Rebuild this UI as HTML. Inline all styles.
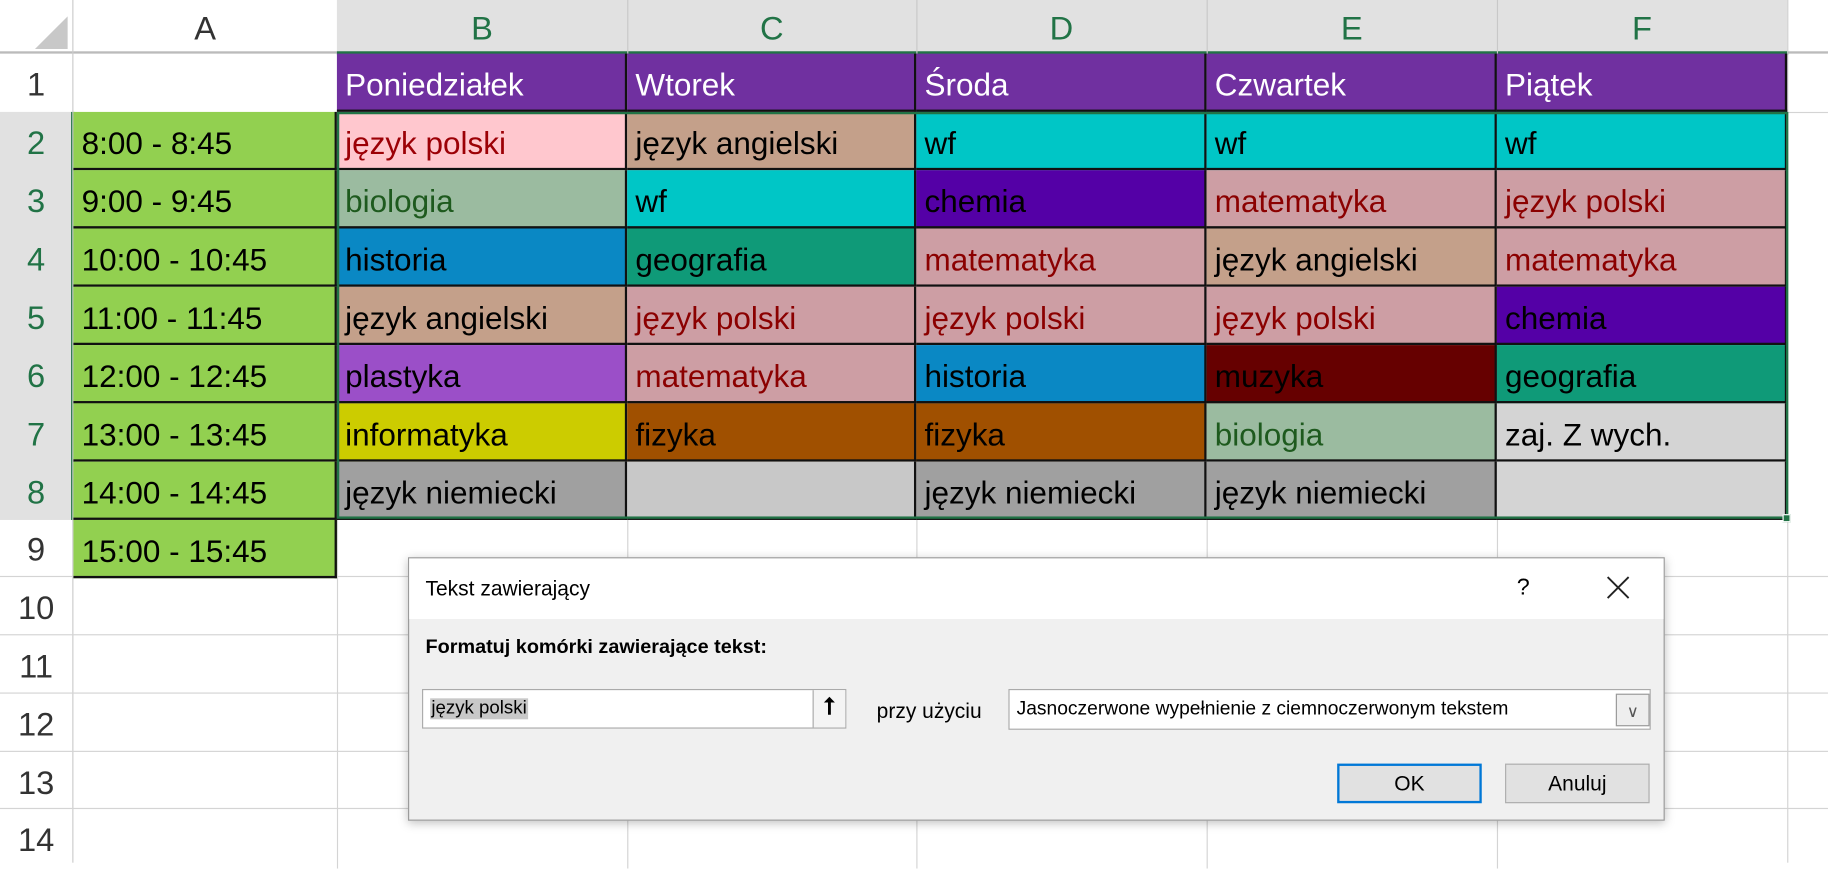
<!DOCTYPE html>
<html><head><meta charset="utf-8"><style>
body{margin:0;width:1828px;height:862px;overflow:hidden;background:#fff}
#w{position:absolute;left:0;top:0;width:1568px;height:740px;transform:scale(1.1658);transform-origin:0 0;font-family:"Liberation Sans",sans-serif}
.a{position:absolute;box-sizing:border-box}
.c{position:absolute;box-sizing:border-box;font-size:27px;line-height:50px;padding-left:7px;padding-top:2px;white-space:nowrap;overflow:hidden;border-right:2px solid #111;border-bottom:2px solid #111}
.h{position:absolute;text-align:center;font-size:28px;color:#217346;line-height:50px}
.r{position:absolute;width:62px;text-align:center;font-size:28px;line-height:50px;padding-top:2px;color:#333}
</style></head><body><div id="w">
<div class="a" style="left:0;top:0;width:1568px;height:46px;background:#fff"></div>
<div class="a" style="left:289px;top:0;width:1245px;height:46px;background:#e1e1e1"></div>
<div class="a" style="left:0;top:96px;width:63px;height:350px;background:#e1e1e1"></div>
<div class="a" style="left:0;top:44px;width:1568px;height:2px;background:#bbb"></div>
<div class="a" style="left:289px;top:44px;width:1245px;height:3px;background:#217346"></div>
<div class="a" style="left:61px;top:96px;width:3px;height:350px;background:#217346"></div>
<div class="a" style="left:62px;top:0;width:1px;height:740px;background:#ccc"></div>
<div class="a" style="left:30px;top:14px;width:0;height:0;border-left:28px solid transparent;border-bottom:28px solid #c8c8c8"></div>
<div class="h" style="left:63px;width:226px;top:0;color:#333">A</div>
<div class="h" style="left:289px;width:249px;top:0">B</div>
<div class="h" style="left:538px;width:248px;top:0">C</div>
<div class="h" style="left:786px;width:249px;top:0">D</div>
<div class="h" style="left:1035px;width:249px;top:0">E</div>
<div class="h" style="left:1284px;width:249px;top:0">F</div>
<div class="a" style="left:538px;top:0;width:1px;height:46px;background:#c8c8c8"></div>
<div class="a" style="left:786px;top:0;width:1px;height:46px;background:#c8c8c8"></div>
<div class="a" style="left:1035px;top:0;width:1px;height:46px;background:#c8c8c8"></div>
<div class="a" style="left:1284px;top:0;width:1px;height:46px;background:#c8c8c8"></div>
<div class="a" style="left:1533px;top:0;width:1px;height:740px;background:#d4d4d4"></div>
<div class="a" style="left:0;top:494px;width:1568px;height:1px;background:#d4d4d4"></div>
<div class="a" style="left:0;top:544px;width:1568px;height:1px;background:#d4d4d4"></div>
<div class="a" style="left:0;top:594px;width:1568px;height:1px;background:#d4d4d4"></div>
<div class="a" style="left:0;top:644px;width:1568px;height:1px;background:#d4d4d4"></div>
<div class="a" style="left:0;top:693px;width:1568px;height:1px;background:#d4d4d4"></div>
<div class="a" style="left:1533px;top:96px;width:35px;height:1px;background:#d4d4d4"></div>
<div class="a" style="left:289px;top:445px;width:1px;height:300px;background:#d4d4d4"></div>
<div class="a" style="left:538px;top:445px;width:1px;height:300px;background:#d4d4d4"></div>
<div class="a" style="left:786px;top:445px;width:1px;height:300px;background:#d4d4d4"></div>
<div class="a" style="left:1035px;top:445px;width:1px;height:300px;background:#d4d4d4"></div>
<div class="a" style="left:1284px;top:445px;width:1px;height:300px;background:#d4d4d4"></div>
<div class="r" style="top:46px">1</div>
<div class="r" style="top:96px;color:#217346">2</div>
<div class="r" style="top:146px;color:#217346">3</div>
<div class="r" style="top:196px;color:#217346">4</div>
<div class="r" style="top:246px;color:#217346">5</div>
<div class="r" style="top:296px;color:#217346">6</div>
<div class="r" style="top:346px;color:#217346">7</div>
<div class="r" style="top:396px;color:#217346">8</div>
<div class="r" style="top:445px">9</div>
<div class="r" style="top:495px">10</div>
<div class="r" style="top:545px">11</div>
<div class="r" style="top:595px">12</div>
<div class="r" style="top:645px">13</div>
<div class="r" style="top:694px">14</div>
<div class="c" style="left:289px;top:46px;width:249px;height:50px;background:#7030a0;color:#fff">Poniedziałek</div>
<div class="c" style="left:538px;top:46px;width:248px;height:50px;background:#7030a0;color:#fff">Wtorek</div>
<div class="c" style="left:786px;top:46px;width:249px;height:50px;background:#7030a0;color:#fff">Środa</div>
<div class="c" style="left:1035px;top:46px;width:249px;height:50px;background:#7030a0;color:#fff">Czwartek</div>
<div class="c" style="left:1284px;top:46px;width:249px;height:50px;background:#7030a0;color:#fff">Piątek</div>
<div class="c" style="left:63px;top:96px;width:226px;height:50px;background:#92d050">8:00 - 8:45</div>
<div class="c" style="left:63px;top:146px;width:226px;height:50px;background:#92d050">9:00 - 9:45</div>
<div class="c" style="left:63px;top:196px;width:226px;height:50px;background:#92d050">10:00 - 10:45</div>
<div class="c" style="left:63px;top:246px;width:226px;height:50px;background:#92d050">11:00 - 11:45</div>
<div class="c" style="left:63px;top:296px;width:226px;height:50px;background:#92d050">12:00 - 12:45</div>
<div class="c" style="left:63px;top:346px;width:226px;height:50px;background:#92d050">13:00 - 13:45</div>
<div class="c" style="left:63px;top:396px;width:226px;height:50px;background:#92d050">14:00 - 14:45</div>
<div class="c" style="left:63px;top:446px;width:226px;height:50px;background:#92d050">15:00 - 15:45</div>
<div class="c" style="left:289px;top:96px;width:249px;height:50px;background:#ffc7ce;color:#9c0006">język polski</div>
<div class="c" style="left:289px;top:146px;width:249px;height:50px;background:#9bbba0;color:#1e5a1e">biologia</div>
<div class="c" style="left:289px;top:196px;width:249px;height:50px;background:#0a88c4">historia</div>
<div class="c" style="left:289px;top:246px;width:249px;height:50px;background:#c4a08a">język angielski</div>
<div class="c" style="left:289px;top:296px;width:249px;height:50px;background:#9b4fc8">plastyka</div>
<div class="c" style="left:289px;top:346px;width:249px;height:50px;background:#cccc00">informatyka</div>
<div class="c" style="left:289px;top:396px;width:249px;height:50px;background:#a0a0a0">język niemiecki</div>
<div class="c" style="left:538px;top:96px;width:248px;height:50px;background:#c4a08a">język angielski</div>
<div class="c" style="left:538px;top:146px;width:248px;height:50px;background:#00c6c6">wf</div>
<div class="c" style="left:538px;top:196px;width:248px;height:50px;background:#0f9a78">geografia</div>
<div class="c" style="left:538px;top:246px;width:248px;height:50px;background:#cd9ea4;color:#8b0000">język polski</div>
<div class="c" style="left:538px;top:296px;width:248px;height:50px;background:#cd9ea4;color:#8b0000">matematyka</div>
<div class="c" style="left:538px;top:346px;width:248px;height:50px;background:#a05000">fizyka</div>
<div class="c" style="left:538px;top:396px;width:248px;height:50px;background:#c8c8c8"></div>
<div class="c" style="left:786px;top:96px;width:249px;height:50px;background:#00c6c6">wf</div>
<div class="c" style="left:786px;top:146px;width:249px;height:50px;background:#5400a6">chemia</div>
<div class="c" style="left:786px;top:196px;width:249px;height:50px;background:#cd9ea4;color:#8b0000">matematyka</div>
<div class="c" style="left:786px;top:246px;width:249px;height:50px;background:#cd9ea4;color:#8b0000">język polski</div>
<div class="c" style="left:786px;top:296px;width:249px;height:50px;background:#0a88c4">historia</div>
<div class="c" style="left:786px;top:346px;width:249px;height:50px;background:#a05000">fizyka</div>
<div class="c" style="left:786px;top:396px;width:249px;height:50px;background:#a0a0a0">język niemiecki</div>
<div class="c" style="left:1035px;top:96px;width:249px;height:50px;background:#00c6c6">wf</div>
<div class="c" style="left:1035px;top:146px;width:249px;height:50px;background:#cd9ea4;color:#8b0000">matematyka</div>
<div class="c" style="left:1035px;top:196px;width:249px;height:50px;background:#c4a08a">język angielski</div>
<div class="c" style="left:1035px;top:246px;width:249px;height:50px;background:#cd9ea4;color:#8b0000">język polski</div>
<div class="c" style="left:1035px;top:296px;width:249px;height:50px;background:#660000">muzyka</div>
<div class="c" style="left:1035px;top:346px;width:249px;height:50px;background:#9bbba0;color:#1e5a1e">biologia</div>
<div class="c" style="left:1035px;top:396px;width:249px;height:50px;background:#a0a0a0">język niemiecki</div>
<div class="c" style="left:1284px;top:96px;width:249px;height:50px;background:#00c6c6">wf</div>
<div class="c" style="left:1284px;top:146px;width:249px;height:50px;background:#cd9ea4;color:#8b0000">język polski</div>
<div class="c" style="left:1284px;top:196px;width:249px;height:50px;background:#cd9ea4;color:#8b0000">matematyka</div>
<div class="c" style="left:1284px;top:246px;width:249px;height:50px;background:#5400a6">chemia</div>
<div class="c" style="left:1284px;top:296px;width:249px;height:50px;background:#0f9a78">geografia</div>
<div class="c" style="left:1284px;top:346px;width:249px;height:50px;background:#d4d4d4">zaj. Z wych.</div>
<div class="c" style="left:1284px;top:396px;width:249px;height:50px;background:#d4d4d4"></div>
<div class="a" style="left:289px;top:96px;width:1245px;height:349px;border:2px solid #217346"></div>
<div class="a" style="left:1529px;top:441px;width:7px;height:7px;background:#217346;border:1px solid #fff"></div>
<div class="a" style="left:350px;top:478px;width:1078px;height:226px;background:#f0f0f0;border:1px solid #999;box-shadow:0 2px 8px rgba(0,0,0,.25);font-size:18px;color:#000">
 <div class="a" style="left:0;top:0;width:1076px;height:52px;background:#fff"></div>
 <div class="a" style="left:14px;top:16px">Tekst zawierający</div>
 <div class="a" style="left:950px;top:14px;font-size:20px">?</div>
 <svg class="a" style="left:1027px;top:15px" width="20" height="20" viewBox="0 0 20 20"><path d="M1 1L19 19M19 1L1 19" stroke="#222" stroke-width="1.6" fill="none"/></svg>
 <div class="a" style="left:14px;top:66px;font-weight:bold;font-size:17px">Formatuj komórki zawierające tekst:</div>
 <div class="a" style="left:11px;top:112px;width:364px;height:34px;background:#fff;border:1px solid #aaa"></div>
 <div class="a" style="left:18px;top:120px;background:#c8c8c8;padding:0 1px;font-size:16px">język polski</div>
 <div class="a" style="left:346px;top:113px;width:28px;height:32px;border-left:1px solid #aaa;background:#f4f4f4;text-align:center;font-weight:bold;font-size:20px;line-height:30px">⭡</div>
 <div class="a" style="left:401px;top:121px">przy użyciu</div>
 <div class="a" style="left:514px;top:112px;width:551px;height:35px;background:#fff;border:1px solid #aaa"></div>
 <div class="a" style="left:521px;top:120px;font-size:16.5px">Jasnoczerwone wypełnienie z ciemnoczerwonym tekstem</div>
 <div class="a" style="left:1035px;top:116px;width:29px;height:28px;border:1px solid #999;background:#eee;text-align:center;font-size:14px;line-height:28px;color:#555">∨</div>
 <div class="a" style="left:796px;top:176px;width:124px;height:34px;border:2px solid #0078d7;background:#e1e1e1;text-align:center;line-height:30px">OK</div>
 <div class="a" style="left:940px;top:176px;width:124px;height:34px;border:1px solid #adadad;background:#e1e1e1;text-align:center;line-height:32px">Anuluj</div>
</div>
</div></body></html>
